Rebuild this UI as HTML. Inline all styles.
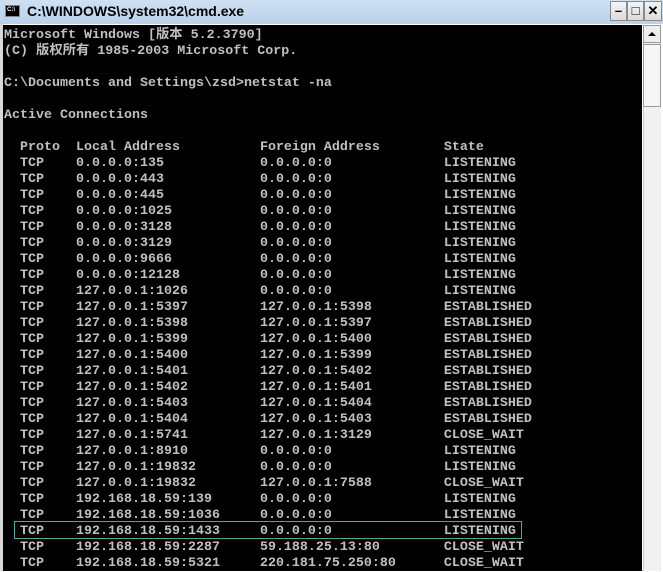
<!DOCTYPE html>
<html><head><meta charset="utf-8"><style>
html,body{margin:0;padding:0;width:663px;height:571px;overflow:hidden;background:#fff;}
#title{position:absolute;left:0;top:0;width:663px;height:24px;background:linear-gradient(#cfe0f2,#b9d1ea);}
#title .t{position:absolute;left:27px;top:3px;font:bold 14px "Liberation Sans",sans-serif;color:#000;}
#icon{position:absolute;left:5px;top:5px;width:15px;height:12px;background:#000;border:1px solid #888;box-sizing:border-box;color:#fff;font:bold 6px "Liberation Sans",sans-serif;line-height:9px;padding-left:1px;}
.btn{position:absolute;top:1px;height:20px;background:linear-gradient(#f4f4f4,#dcdcdc);border:1px solid #8a8a8a;box-sizing:border-box;font:bold 13px "Liberation Sans",sans-serif;text-align:center;line-height:18px;}
#con{position:absolute;left:3px;top:25px;width:639px;height:546px;background:#000;}
#pre{position:absolute;left:1px;top:3px;margin:0;font:bold 13.33px/16px "Liberation Mono","Noto Sans CJK SC",monospace;color:#c0c0c0;white-space:pre;}
#lb{position:absolute;left:0;top:24px;width:3px;height:547px;background:#d8d8d8;}
#sb{position:absolute;left:643px;top:25px;width:18px;height:546px;background:#f0f0f0;border-left:1px solid #ccc;box-sizing:border-box;}
#up{position:absolute;left:643px;top:25px;width:18px;height:18px;background:#eee;border:1px solid #999;box-sizing:border-box;}
#thumb{position:absolute;left:643px;top:44px;width:18px;height:63px;background:#f6f6f6;border:1px solid #999;box-sizing:border-box;}
#hl{position:absolute;left:14px;top:521px;width:508px;height:18px;border:1px solid #4fa8a0;box-sizing:border-box;}
</style></head><body>
<div id="title"><div id="icon">C:\</div><div class="t">C:\WINDOWS\system32\cmd.exe</div>
<div class="btn" style="left:610px;width:17px">–</div>
<div class="btn" style="left:627px;width:17px">□</div>
<div class="btn" style="left:644px;width:18px">✕</div></div>
<div id="lb"></div>
<div id="con"><pre id="pre">Microsoft Windows [版本 5.2.3790]
(C) 版权所有 1985-2003 Microsoft Corp.

C:\Documents and Settings\zsd>netstat -na

Active Connections

  Proto  Local Address          Foreign Address        State
  TCP    0.0.0.0:135            0.0.0.0:0              LISTENING
  TCP    0.0.0.0:443            0.0.0.0:0              LISTENING
  TCP    0.0.0.0:445            0.0.0.0:0              LISTENING
  TCP    0.0.0.0:1025           0.0.0.0:0              LISTENING
  TCP    0.0.0.0:3128           0.0.0.0:0              LISTENING
  TCP    0.0.0.0:3129           0.0.0.0:0              LISTENING
  TCP    0.0.0.0:9666           0.0.0.0:0              LISTENING
  TCP    0.0.0.0:12128          0.0.0.0:0              LISTENING
  TCP    127.0.0.1:1026         0.0.0.0:0              LISTENING
  TCP    127.0.0.1:5397         127.0.0.1:5398         ESTABLISHED
  TCP    127.0.0.1:5398         127.0.0.1:5397         ESTABLISHED
  TCP    127.0.0.1:5399         127.0.0.1:5400         ESTABLISHED
  TCP    127.0.0.1:5400         127.0.0.1:5399         ESTABLISHED
  TCP    127.0.0.1:5401         127.0.0.1:5402         ESTABLISHED
  TCP    127.0.0.1:5402         127.0.0.1:5401         ESTABLISHED
  TCP    127.0.0.1:5403         127.0.0.1:5404         ESTABLISHED
  TCP    127.0.0.1:5404         127.0.0.1:5403         ESTABLISHED
  TCP    127.0.0.1:5741         127.0.0.1:3129         CLOSE_WAIT
  TCP    127.0.0.1:8910         0.0.0.0:0              LISTENING
  TCP    127.0.0.1:19832        0.0.0.0:0              LISTENING
  TCP    127.0.0.1:19832        127.0.0.1:7588         CLOSE_WAIT
  TCP    192.168.18.59:139      0.0.0.0:0              LISTENING
  TCP    192.168.18.59:1036     0.0.0.0:0              LISTENING
  TCP    192.168.18.59:1433     0.0.0.0:0              LISTENING
  TCP    192.168.18.59:2287     59.188.25.13:80        CLOSE_WAIT
  TCP    192.168.18.59:5321     220.181.75.250:80      CLOSE_WAIT</pre></div>
<div id="hl"></div>
<div id="sb"></div><div id="up"><svg width="16" height="16" style="position:absolute;left:0;top:0"><path d="M4 10 L8 6 L12 10 Z" fill="#000"/></svg></div>
<div id="thumb"></div>
</body></html>
